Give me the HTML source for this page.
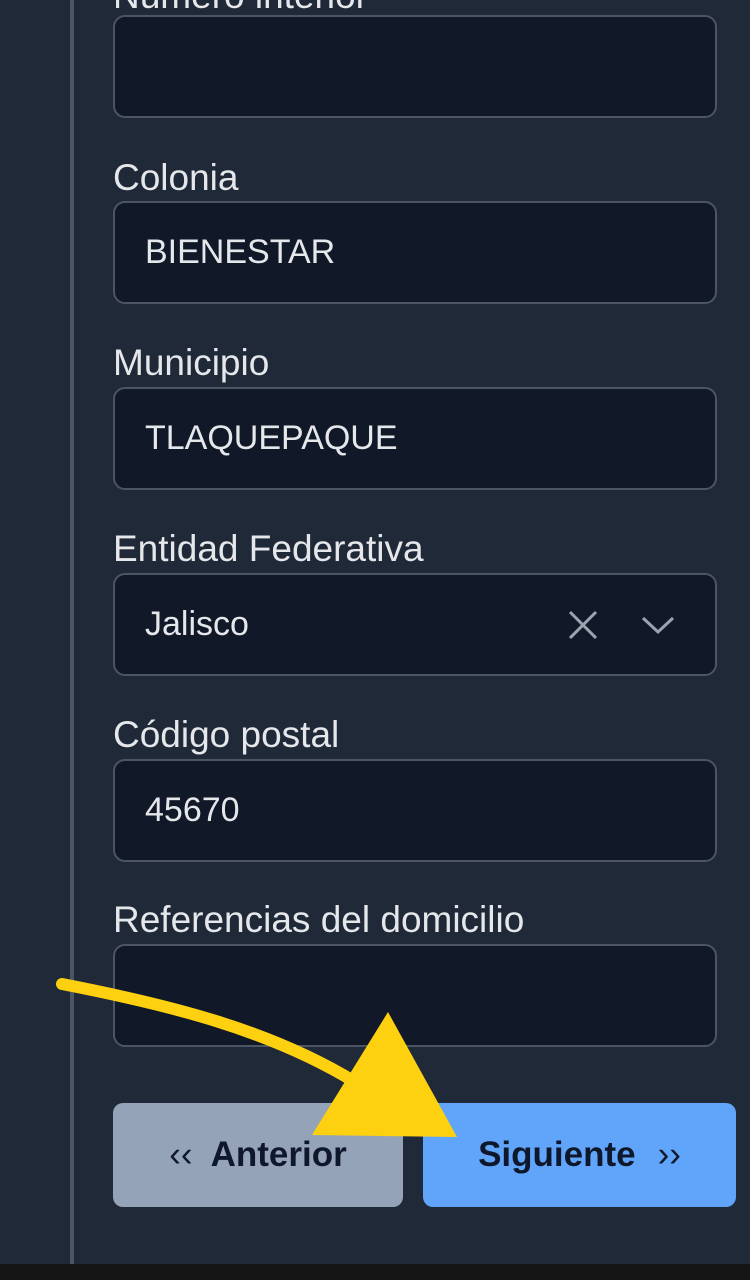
<!DOCTYPE html>
<html><head><meta charset="utf-8"><style>
*{margin:0;padding:0;box-sizing:border-box}
body{width:750px;height:1280px;background:#1f2937;position:relative;overflow:hidden;font-family:"Liberation Sans",Roboto,sans-serif;color:#e5e7eb}
.vl{position:absolute;left:70px;top:0;width:4px;height:1264px;background:#4b5563}
.bot{position:absolute;left:0;top:1264px;width:750px;height:16px;background:#151515}
.lbl{position:absolute;left:113px;font-size:37px;color:#e5e7eb;line-height:40px}
.inp{position:absolute;left:113px;width:604px;height:103px;background:#111827;border:2px solid #4b5563;border-radius:12px;font-size:34px;padding-left:30px;line-height:99px;color:#e5e7eb}
.btn{position:absolute;top:1103px;height:104px;border-radius:10px;font-weight:bold;font-size:35px;color:#0f172a;display:flex;align-items:center;justify-content:center}
</style></head><body>
<div class="vl"></div>
<div class="lbl" style="top:-24px">Número interior</div>
<div class="inp" style="top:15px"></div>
<div class="lbl" style="top:158px">Colonia</div>
<div class="inp" style="top:201px">BIENESTAR</div>
<div class="lbl" style="top:343px">Municipio</div>
<div class="inp" style="top:387px">TLAQUEPAQUE</div>
<div class="lbl" style="top:529px">Entidad Federativa</div>
<div class="inp" style="top:573px">Jalisco
<svg style="position:absolute;left:452px;top:34px" width="32" height="32" viewBox="0 0 32 32"><path d="M3 3L29 29M29 3L3 29" stroke="#9ca3af" stroke-width="3" fill="none"/></svg>
<svg style="position:absolute;left:526px;top:40px" width="34" height="20" viewBox="0 0 34 20"><path d="M2 3L17 17L32 3" stroke="#9ca3af" stroke-width="3" fill="none"/></svg>
</div>
<div class="lbl" style="top:715px">Código postal</div>
<div class="inp" style="top:759px">45670</div>
<div class="lbl" style="top:900px">Referencias del domicilio</div>
<div class="inp" style="top:944px"></div>
<div class="btn" style="left:113px;width:290px;background:#94a3b8"><span style="font-weight:normal;margin-right:18px">‹‹</span>Anterior</div>
<div class="btn" style="left:423px;width:313px;background:#60a5fa">Siguiente<span style="font-weight:normal;margin-left:22px">››</span></div>
<svg style="position:absolute;left:0;top:0" width="750" height="1280">
<path d="M62 984 C170 1005 270 1030 355 1082" stroke="#fdd10f" stroke-width="12" fill="none" stroke-linecap="round"/>
<polygon points="388,1012 312,1135 457,1137" fill="#fdd10f"/>
</svg>
<div class="bot"></div>
</body></html>
